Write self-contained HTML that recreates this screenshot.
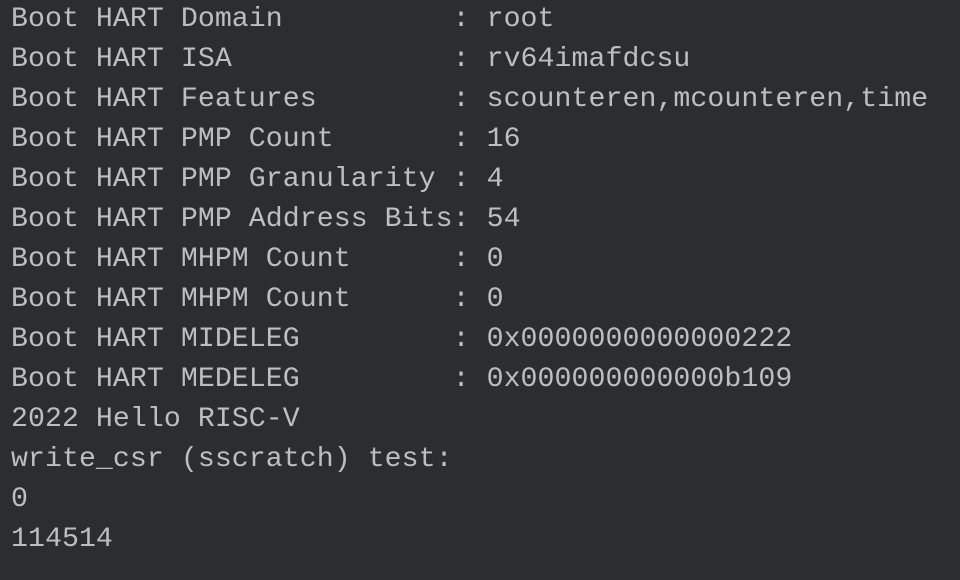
<!DOCTYPE html>
<html><head><meta charset="utf-8"><style>
html,body{margin:0;padding:0;background:#2b2d30;width:960px;height:580px;overflow:hidden}
pre{margin:0;padding:0 0 0 11px;font-family:"Liberation Mono",monospace;font-size:28.2px;letter-spacing:0.07px;line-height:40px;color:#bcbec4;white-space:pre}
</style></head><body><pre>Boot HART Domain          : root
Boot HART ISA             : rv64imafdcsu
Boot HART Features        : scounteren,mcounteren,time
Boot HART PMP Count       : 16
Boot HART PMP Granularity : 4
Boot HART PMP Address Bits: 54
Boot HART MHPM Count      : 0
Boot HART MHPM Count      : 0
Boot HART MIDELEG         : 0x0000000000000222
Boot HART MEDELEG         : 0x000000000000b109
2022 Hello RISC-V
write_csr (sscratch) test:
0
114514</pre></body></html>
